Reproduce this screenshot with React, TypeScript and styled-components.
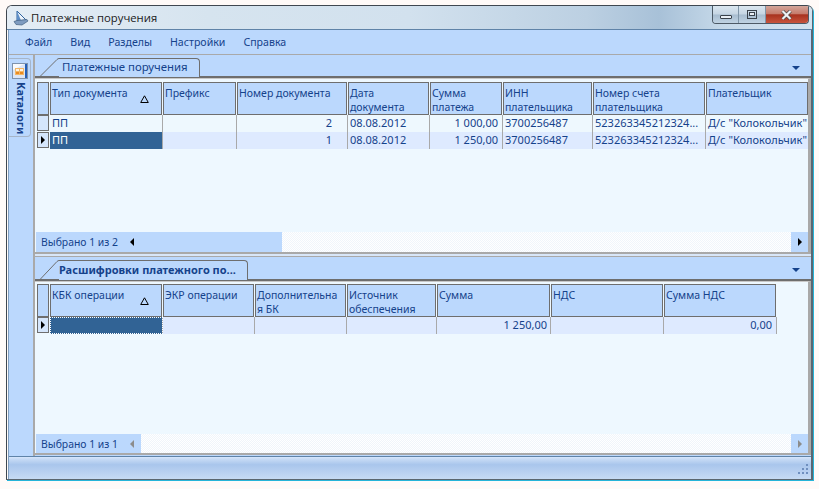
import React from 'react'
import styled, { createGlobalStyle } from 'styled-components'

const GlobalStyle = createGlobalStyle`
  * { box-sizing: border-box; }
  html, body { margin: 0; padding: 0; background: #fffaf8; }
  body { font-family: "Noto Sans", "DejaVu Sans", sans-serif; font-size: 11px; color: #15428b; }
  #root { width: 819px; height: 489px; overflow: hidden; }
`

const Shell = styled.div`
  width: 807px;
  height: 475px;
  margin: 5px 0 0 6px;
  display: flex;
  flex-direction: column;
  border: 1px solid #3f4750;
  border-right-color: #5b6670;
  border-bottom-color: #5b6670;
  border-radius: 6px 6px 0 0;
  box-shadow: 1px 1px 0 #27b4d8;
  overflow: hidden;
`

const TitleBar = styled.div`
  flex: 0 0 24px;
  display: flex;
  align-items: flex-start;
  background: linear-gradient(90deg, #e4edf5 0%, #d6e4ef 25%, #d2e1ee 50%, #bcd0e2 72%, #a8c1d8 81%, #c6d9e9 89%, #d3e3f0 100%);
  border-bottom: 1px solid #5f83a8;
`

const TitleIcon = styled.svg`
  width: 16px;
  height: 16px;
  margin: 4px 0 0 6px;
`

const TitleText = styled.span`
  margin: 4px 0 0 2px;
  font-family: "Open Sans", "Liberation Sans", sans-serif;
  font-size: 11.3px;
  line-height: 16px;
  color: #1a1a1a;
  flex: 1;
`

const CaptionButtons = styled.div`
  display: flex;
  height: 18px;
  width: 97px;
  margin-right: 3px;
  border: 1px solid #4d5a66;
  border-top: 0;
  border-radius: 0 0 4px 4px;
  overflow: hidden;
`

const CaptionButton = styled.div<{ $w: number; $close?: boolean }>`
  width: ${(p) => p.$w}px;
  display: flex;
  align-items: center;
  justify-content: center;
  border-right: 1px solid ${(p) => (p.$close ? 'transparent' : '#7f95a8')};
  background: ${(p) =>
    p.$close
      ? 'linear-gradient(180deg, #d3a59a 0%, #c77c6c 45%, #a8321f 52%, #c8543c 100%)'
      : 'linear-gradient(180deg, #dbe6ef 0%, #c5d5e3 48%, #a7bccf 52%, #c0d3e3 100%)'};
`

const Client = styled.div`
  flex: 1;
  min-height: 0;
  display: flex;
  flex-direction: column;
  background: #bbd8fd;
  margin: 0 0 0 1px;
  border-left: 1px solid #7f9cbd;
  border-right: 1px solid #5b6670;
`

const MenuBar = styled.div`
  flex: 0 0 25px;
  display: flex;
  align-items: center;
  gap: 18px;
  padding-left: 16px;
  font-size: 10.6px;
  border-bottom: 1px solid #a9a9a9;
`

const MenuItem = styled.span`
  line-height: 14px;
`

const Body = styled.div`
  flex: 1;
  min-height: 0;
  display: flex;
`

const SideBar = styled.div`
  flex: 0 0 24px;
  padding-top: 3px;
`

const SideTab = styled.div`
  width: 22px;
  height: 79px;
  display: flex;
  flex-direction: column;
  align-items: center;
  padding: 4px 0 0 1px;
  gap: 3px;
  border: 1px solid #a6b5c8;
  border-left: 0;
  border-radius: 0 4px 4px 0;
`

const SideLabel = styled.span`
  writing-mode: vertical-rl;
  font-weight: bold;
  font-size: 11px;
  line-height: 14px;
  margin-left: 1px;
`

const Workspace = styled.div`
  flex: 1;
  min-width: 0;
  display: flex;
  flex-direction: column;
  border-left: 2px solid #a9a9a9;
`

const Pane = styled.div<{ $h: number }>`
  flex: 0 0 ${(p) => p.$h}px;
  display: flex;
  flex-direction: column;
  min-height: 0;
`

const Splitter = styled.div`
  flex: 0 0 3px;
  border-bottom: 1px solid #a9a9a9;
  background: #d8e6f8;
`

const TabStrip = styled.div<{ $h: number }>`
  flex: 0 0 auto;
  height: ${(p) => p.$h}px;
  display: flex;
  align-items: flex-end;
  border-bottom: 2px solid #6e6e6e;
`

const TabSlope = styled.svg`
  width: 24px;
  display: block;
  flex: none;
  margin-bottom: -1px;
`

const Tab = styled.div<{ $w: number; $h: number; $bold?: boolean }>`
  width: ${(p) => p.$w}px;
  height: ${(p) => p.$h}px;
  margin-bottom: -1px;
  padding-left: ${(p) => (p.$bold ? 0 : 3)}px;
  line-height: ${(p) => p.$h - 3}px;
  white-space: nowrap;
  font-weight: ${(p) => (p.$bold ? 'bold' : 'normal')};
  font-size: ${(p) => (p.$bold ? '11px' : '11.4px')};
  border-top: 1px solid #6e6e6e;
  border-right: 1px solid #6e6e6e;
  border-radius: 0 4px 0 0;
  background: #bbd8fd;
`

const TabMenu = styled.div<{ $b: number }>`
  margin-left: auto;
  margin-right: 11px;
  margin-bottom: ${(p) => p.$b}px;
  width: 0;
  height: 0;
  border-left: 4px solid transparent;
  border-right: 4px solid transparent;
  border-top: 4px solid #15428b;
`

const GridArea = styled.div<{ $top: number }>`
  flex: 1;
  min-height: 0;
  display: flex;
  flex-direction: column;
  background: #eef8ff;
  border-right: 3px solid #a9a9a9;
  padding: ${(p) => p.$top}px 0 0 2px;
  border-top: 1px solid #c8c8c8;
  overflow: hidden;
`

const GridRows = styled.div`
  flex: 1;
  min-height: 0;
`

const Row = styled.div`
  display: flex;
`

const HeaderCell = styled.div<{ $w: number }>`
  flex: 0 0 ${(p) => p.$w}px;
  width: ${(p) => p.$w}px;
  height: 33px;
  margin-right: 1px;
  padding: 3px 0 0 1px;
  position: relative;
  font-size: 10.5px;
  line-height: 14px;
  background: #bbd8fd;
  border: 1px solid #6e6e6e;
  word-break: break-word;
`

const SortMark = styled.svg`
  position: absolute;
  right: 12px;
  top: 12px;
  width: 9px;
  height: 8px;
`

const HeaderMarker = styled.div`
  flex: 0 0 12px;
  width: 12px;
  height: 33px;
  margin-right: 1px;
  background: #bbd8fd;
  border: 1px solid #6e6e6e;
`

const Marker = styled.div`
  flex: 0 0 12px;
  width: 12px;
  height: 16px;
  margin: 0 1px 1px 0;
  display: flex;
  align-items: center;
  justify-content: center;
  background: #d5e6fc;
  border: 1px solid #6e6e6e;
`

const Cell = styled.div<{ $w: number; $even?: boolean; $selected?: boolean; $right?: boolean; $focus?: boolean; $pad?: number }>`
  flex: 0 0 ${(p) => p.$w + 1}px;
  height: 17px;
  padding: 0 ${(p) => p.$pad ?? 3}px 0 2px;
  line-height: 16px;
  white-space: nowrap;
  overflow: hidden;
  text-align: ${(p) => (p.$right ? 'right' : 'left')};
  color: ${(p) => (p.$selected ? '#ffffff' : '#15428b')};
  background: ${(p) => (p.$selected ? '#316395' : p.$even ? '#deeaff' : '#eef8fe')};
  border-right: 1px solid #a9a9a9;
  ${(p) => p.$focus && 'outline: 1px dotted #ffffff; outline-offset: -1px;'}
`

const FooterBar = styled.div<{ $h: number }>`
  flex: 0 0 ${(p) => p.$h}px;
  display: flex;
  align-items: stretch;
  margin-left: -1px;
`

const FooterLabel = styled.div<{ $w: number }>`
  flex: 0 0 ${(p) => p.$w}px;
  display: flex;
  align-items: center;
  padding-left: 5px;
  background: #bbd8fd;
`

const FooterText = styled.span`
  flex: 0 0 89px;
  font-size: 10.4px;
`

const ScrollTrack = styled.div`
  flex: 1;
  background: repeating-conic-gradient(#ffffff 0% 25%, #f0f5fb 0% 50%) 0 0 / 2px 2px;
`

const ScrollButton = styled.div`
  flex: 0 0 17px;
  display: flex;
  align-items: center;
  justify-content: center;
  background: #bbd8fd;
`

const Arrow = styled.span<{ $dir: 'left' | 'right'; $off?: boolean }>`
  width: 0;
  height: 0;
  border-top: 4px solid transparent;
  border-bottom: 4px solid transparent;
  ${(p) =>
    p.$dir === 'left'
      ? `border-right: 4px solid ${p.$off ? '#8c8c8c' : '#000'};`
      : `border-left: 4px solid ${p.$off ? '#8c8c8c' : '#000'};`}
`

const PaneBottomLine = styled.div`
  flex: 0 0 2px;
  background: #a9a9a9;
`

const StatusBar = styled.div`
  flex: 0 0 23px;
  display: flex;
  justify-content: flex-end;
  align-items: flex-end;
  padding: 0 2px 5px 0;
  border-top: 1px solid #5f83a8;
  background: linear-gradient(180deg, #d6e6fb 0%, #c6daf5 10%, #a9c6ec 35%, #b7cff0 65%, #c6daf4 100%);
`

const Grip = styled.svg`
  width: 11px;
  height: 10px;
`

type Col = { title: string; w: number; sort?: boolean; pad?: number }
type RowData = { cells: string[]; right: number[]; selected?: number; even?: boolean; active?: boolean; focus?: boolean }

const paymentCols: Col[] = [
  { title: 'Тип документа', w: 112, sort: true },
  { title: 'Префикс', w: 73 },
  { title: 'Номер документа', w: 110, pad: 15 },
  { title: 'Дата документа', w: 81 },
  { title: 'Сумма платежа', w: 72, pad: 4 },
  { title: 'ИНН плательщика', w: 89 },
  { title: 'Номер счета плательщика', w: 112 },
  { title: 'Плательщик', w: 102 },
]

const paymentRows: RowData[] = [
  {
    cells: ['ПП', '', '2', '08.08.2012', '1 000,00', '3700256487', '523263345212324...', 'Д/с "Колокольчик"'],
    right: [2, 4],
  },
  {
    cells: ['ПП', '', '1', '08.08.2012', '1 250,00', '3700256487', '523263345212324...', 'Д/с "Колокольчик"'],
    right: [2, 4],
    selected: 0,
    even: true,
    active: true,
  },
]

const detailCols: Col[] = [
  { title: 'КБК операции', w: 112, sort: true },
  { title: 'ЭКР операции', w: 91 },
  { title: 'Дополнительна я БК', w: 91 },
  { title: 'Источник обеспечения', w: 89 },
  { title: 'Сумма', w: 113 },
  { title: 'НДС', w: 112 },
  { title: 'Сумма НДС', w: 112, pad: 4 },
]

const detailRows: RowData[] = [
  {
    cells: ['', '', '', '', '1 250,00', '', '0,00'],
    right: [4, 6],
    selected: 0,
    even: true,
    active: true,
    focus: true,
  },
]

function DataGrid({ cols, rows }: { cols: Col[]; rows: RowData[] }) {
  return (
    <GridRows>
      <Row>
        <HeaderMarker />
        {cols.map((c) => (
          <HeaderCell key={c.title} $w={c.w}>
            {c.title}
            {c.sort && (
              <SortMark viewBox="0 0 9 8">
                <path d="M4.5 .8 L8.3 7.5 H.7 Z" fill="none" stroke="#000" />
              </SortMark>
            )}
          </HeaderCell>
        ))}
      </Row>
      {rows.map((r, i) => (
        <Row key={i}>
          <Marker>{r.active && <Arrow $dir="right" />}</Marker>
          {cols.map((c, j) => (
            <Cell
              key={c.title}
              $w={c.w}
              $pad={c.pad}
              $even={r.even}
              $selected={r.selected === j}
              $focus={r.focus && r.selected === j}
              $right={r.right.includes(j)}
            >
              {r.cells[j]}
            </Cell>
          ))}
        </Row>
      ))}
    </GridRows>
  )
}

function Footer({ label, w, h, off }: { label: string; w: number; h: number; off?: boolean }) {
  return (
    <FooterBar $h={h}>
      <FooterLabel $w={w}>
        <FooterText>{label}</FooterText>
        <Arrow $dir="left" $off={off} />
      </FooterLabel>
      <ScrollTrack />
      <ScrollButton>
        <Arrow $dir="right" $off={off} />
      </ScrollButton>
    </FooterBar>
  )
}

function Slope({ h }: { h: number }) {
  return (
    <TabSlope height={h} viewBox={`0 0 24 ${h}`}>
      <path d={`M0 ${h - 0.5} H5 L${22} 1.5 Q23 .5 24 .5`} fill="none" stroke="#6e6e6e" />
    </TabSlope>
  )
}

export default function App() {
  return (
    <>
      <GlobalStyle />
      <Shell>
        <TitleBar>
          <TitleIcon viewBox="0 0 16 16">
            <path d="M4 1 L13 10 L4 11 Z" fill="#eef4fb" stroke="#2f639f" />
            <path d="M4 1 L4 11 L8 10.5 Z" fill="#5f8fc8" />
            <path d="M1 11.5 L4 10.5 L14 9.5 L15 11 L9 15 L3 14.5 Z" fill="#7f9cc0" stroke="#44607f" strokeWidth=".7" />
          </TitleIcon>
          <TitleText>Платежные поручения</TitleText>
          <CaptionButtons>
            <CaptionButton $w={26}>
              <svg width="12" height="10" viewBox="0 0 12 10">
                <rect x=".5" y="5.5" width="11" height="3" rx=".5" fill="#e8eef4" stroke="#39414a" />
              </svg>
            </CaptionButton>
            <CaptionButton $w={27}>
              <svg width="11" height="10" viewBox="0 0 11 10">
                <rect x=".5" y=".5" width="9" height="8" fill="none" stroke="#39414a" />
                <rect x="2.5" y="2.5" width="5" height="3" fill="#e8eef4" stroke="#39414a" />
              </svg>
            </CaptionButton>
            <CaptionButton $w={42} $close>
              <svg width="13" height="10" viewBox="0 0 13 10">
                <path d="M2.5 1 L10.5 9 M10.5 1 L2.5 9" stroke="#4a4744" strokeWidth="3.6" />
                <path d="M2.5 1 L10.5 9 M10.5 1 L2.5 9" stroke="#eef1f4" strokeWidth="2.2" />
              </svg>
            </CaptionButton>
          </CaptionButtons>
        </TitleBar>
        <Client>
          <MenuBar>
            <MenuItem>Файл</MenuItem>
            <MenuItem>Вид</MenuItem>
            <MenuItem>Разделы</MenuItem>
            <MenuItem>Настройки</MenuItem>
            <MenuItem>Справка</MenuItem>
          </MenuBar>
          <Body>
            <SideBar>
              <SideTab>
                <svg width="16" height="16" viewBox="0 0 16 16">
                  <rect x=".5" y=".5" width="15" height="15" fill="#dce6f6" stroke="#7f93ad" />
                  <path d="M1 1 H12 L1 7 Z" fill="#f8fafd" />
                  <rect x="3" y="5" width="9" height="7" fill="#f2b766" />
                  <rect x="4" y="6" width="3" height="2" fill="#fff3df" />
                  <rect x="8" y="6" width="3" height="2" fill="#fff3df" />
                  <rect x="4" y="9" width="3" height="2" fill="#ea8a22" />
                  <rect x="8" y="9" width="3" height="2" fill="#ea8a22" />
                  <rect x="13" y="1" width="2" height="14" fill="#2560b8" />
                </svg>
                <SideLabel>Каталоги</SideLabel>
              </SideTab>
            </SideBar>
            <Workspace>
              <Pane $h={199}>
                <TabStrip $h={23}>
                  <Slope h={19} />
                  <Tab $w={141} $h={19}>
                    Платежные поручения
                  </Tab>
                  <TabMenu $b={6} />
                </TabStrip>
                <GridArea $top={3}>
                  <DataGrid cols={paymentCols} rows={paymentRows} />
                  <Footer label="Выбрано 1 из 2" w={246} h={20} />
                </GridArea>
                <PaneBottomLine />
              </Pane>
              <Splitter />
              <Pane $h={198}>
                <TabStrip $h={24}>
                  <Slope h={20} />
                  <Tab $w={189} $h={20} $bold>
                    Расшифровки платежного по...
                  </Tab>
                  <TabMenu $b={7} />
                </TabStrip>
                <GridArea $top={2}>
                  <DataGrid cols={detailCols} rows={detailRows} />
                  <Footer label="Выбрано 1 из 1" w={105} h={19} off />
                </GridArea>
                <PaneBottomLine />
              </Pane>
            </Workspace>
          </Body>
          <StatusBar>
            <Grip viewBox="0 0 11 10">
              <g fill="#6f8fbf">
                <rect x="8" y="0" width="2" height="2" />
                <rect x="4" y="4" width="2" height="2" />
                <rect x="8" y="4" width="2" height="2" />
                <rect x="0" y="8" width="2" height="2" />
                <rect x="4" y="8" width="2" height="2" />
                <rect x="8" y="8" width="2" height="2" />
              </g>
            </Grip>
          </StatusBar>
        </Client>
      </Shell>
    </>
  )
}
